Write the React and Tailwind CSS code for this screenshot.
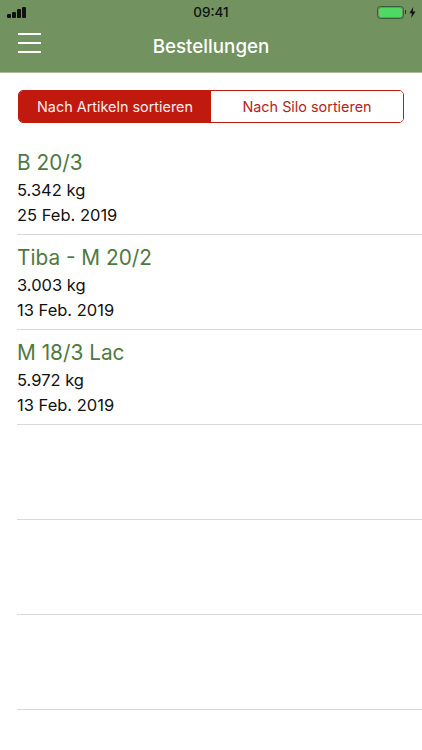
const rows = [
  { t: "B 20/3", w: "5.342 kg", d: "25 Feb. 2019" },
  { t: "Tiba - M 20/2", w: "3.003 kg", d: "13 Feb. 2019" },
  { t: "M 18/3 Lac", w: "5.972 kg", d: "13 Feb. 2019" },
  {},
  {},
  {},
];

export default function App() {
  return (
    <div className="w-[422px] h-[750px] bg-white overflow-hidden font-['Inter',sans-serif]">
      <header className="h-[73px] bg-[#72925f] border-b border-[#a9bc9d]">
        <div className="h-6 pl-[7px] pr-[6px] flex items-center justify-between relative">
          <div className="flex items-end gap-[1px] h-[11px]">
            <span className="w-[4px] h-[4px] bg-[#111] rounded-[1px]" />
            <span className="w-[4px] h-[6px] bg-[#111] rounded-[1px]" />
            <span className="w-[4px] h-[9px] bg-[#111] rounded-[1px]" />
            <span className="w-[4px] h-[11px] bg-[#111] rounded-[1px]" />
          </div>
          <span className="absolute left-0 right-0 text-center text-[13.5px] font-medium text-[#111]">09:41</span>
          <div className="flex items-center">
            <div className="w-[27px] h-[13px] rounded-[3.5px] border border-[#3f5a38] p-[1px]">
              <div className="h-full rounded-[2px] bg-[#4cd964]" />
            </div>
            <span className="w-[1px] h-[4px] ml-[1px] bg-[#333]" />
            <svg width="7" height="11" viewBox="0 0 7 11" className="ml-[3px]">
              <path d="M4.2 0 0.5 6.2h2.4L2.3 11 6.5 4.4H3.8z" fill="#111" />
            </svg>
          </div>
        </div>
        <div className="h-[47px] relative flex items-center justify-center">
          <div className="absolute left-[18px] top-[9px] flex flex-col gap-[7px]">
            <span className="block w-[23px] h-[2px] bg-white" />
            <span className="block w-[23px] h-[2px] bg-white" />
            <span className="block w-[23px] h-[2px] bg-white" />
          </div>
          <span className="text-white text-[18.8px] font-medium">Bestellungen</span>
        </div>
      </header>

      <div className="mx-[18px] mt-[17px] h-[33px] w-[386px] flex rounded-[5px] border border-[#c0190d] overflow-hidden text-[14.4px]">
        <div className="w-[192px] bg-[#c0190d] text-[#fbeeee] flex items-center justify-center">Nach Artikeln sortieren</div>
        <div className="flex-1 bg-white text-[#b5241c] flex items-center justify-center">Nach Silo sortieren</div>
      </div>

      <div className="mt-[17px] ml-[17px]">
        {rows.map((r, i) => (
          <div key={i} className="h-[95px] border-b border-[#d8d8d8] pt-[9px]">
            {r.t && (
              <>
                <div className="text-[20.8px] leading-[28px] text-[#4f7a3f]">{r.t}</div>
                <div className="text-[16.5px] leading-[24px] mt-[1px] text-[#111]">{r.w}</div>
                <div className="text-[16.5px] leading-[24px] mt-[1px] text-[#111]">{r.d}</div>
              </>
            )}
          </div>
        ))}
      </div>
    </div>
  );
}
